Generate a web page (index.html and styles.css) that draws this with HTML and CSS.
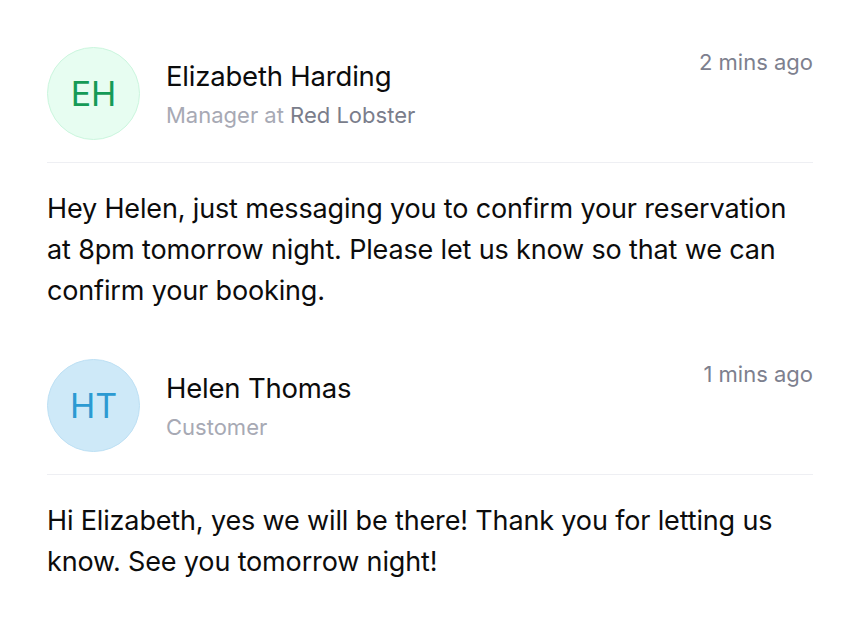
FILE: index.html
```html
<!DOCTYPE html>
<html>
<head>
<meta charset="utf-8">
<link rel="stylesheet" href="styles.css">
</head>
<body>
<div class="thread">
  <div class="message">
    <div class="header">
      <div class="avatar avatar-green">EH</div>
      <div class="who">
        <div class="name">Elizabeth Harding</div>
        <div class="role">Manager at <span class="company">Red Lobster</span></div>
      </div>
      <div class="time">2 mins ago</div>
    </div>
    <p class="body">Hey Helen, just messaging you to confirm your reservation at 8pm tomorrow night. Please let us know so that we can confirm your booking.</p>
  </div>
  <div class="message">
    <div class="header">
      <div class="avatar avatar-blue">HT</div>
      <div class="who">
        <div class="name">Helen Thomas</div>
        <div class="role">Customer</div>
      </div>
      <div class="time">1 mins ago</div>
    </div>
    <p class="body">Hi Elizabeth, yes we will be there! Thank you for letting us know. See you tomorrow night!</p>
  </div>
</div>
</body>
</html>
```
FILE: styles.css
```css
html, body {
  margin: 0;
  padding: 0;
  background: #ffffff;
}
body {
  font-family: Inter, "Noto Sans", sans-serif;
  color: #111111;
}
.thread {
  width: 766px;
  padding: 47px 0 0 47px;
  display: flex;
  flex-direction: column;
  gap: 48px;
}
.header {
  display: flex;
  align-items: flex-start;
  padding-bottom: 22px;
  border-bottom: 1px solid #eeeff3;
}
.avatar {
  width: 91px;
  height: 91px;
  border-radius: 50%;
  display: flex;
  align-items: center;
  justify-content: center;
  font-size: 34px;
  flex-shrink: 0;
}
.avatar-green {
  background: #e7fdf1;
  border: 1px solid #cbf6de;
  color: #159a56;
}
.avatar-blue {
  background: #cee9f8;
  border: 1px solid #bde0f4;
  color: #2c9ad2;
}
.who {
  margin-left: 26px;
  padding-top: 11px;
  flex: 1;
}
.name {
  font-size: 27.5px;
  line-height: 36px;
  letter-spacing: -0.2px;
  color: #0c0c0c;
}
.role {
  font-size: 22px;
  line-height: 34px;
  margin-top: 4px;
  color: #a7a9b4;
}
.company {
  color: #7a7d8b;
}
.time {
  font-size: 22px;
  line-height: 30px;
  color: #7d808e;
  padding-top: 0;
}
.body {
  margin: 25px 0 0 0;
  font-size: 27px;
  line-height: 41px;
  letter-spacing: -0.15px;
  color: #0c0c0c;
}
```
